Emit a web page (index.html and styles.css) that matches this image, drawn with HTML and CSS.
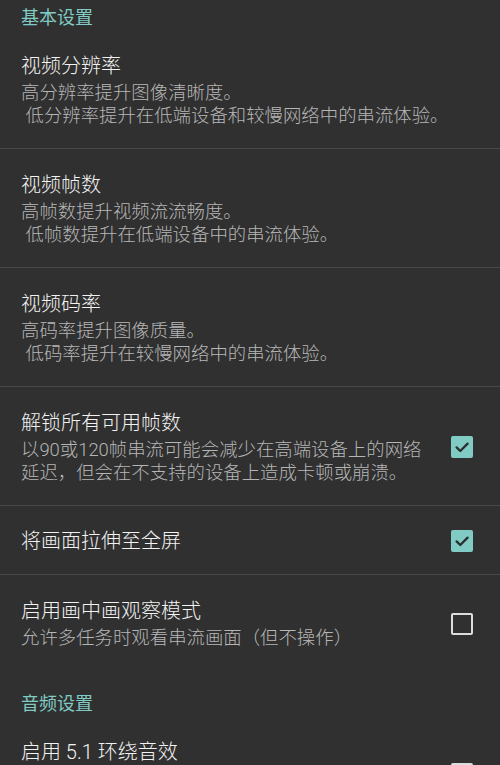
FILE: index.html
```html
<!DOCTYPE html>
<html lang="zh">
<head>
<meta charset="utf-8">
<title>设置</title>
<link rel="stylesheet" href="styles.css">
</head>
<body>
<div class="prefs">
  <div class="category first">基本设置</div>

  <div class="pref divided">
    <div class="text">
      <div class="title">视频分辨率</div>
      <div class="summary">高分辨率提升图像清晰度。
 低分辨率提升在低端设备和较慢网络中的串流体验。</div>
    </div>
  </div>

  <div class="pref divided">
    <div class="text">
      <div class="title">视频帧数</div>
      <div class="summary">高帧数提升视频流流畅度。
 低帧数提升在低端设备中的串流体验。</div>
    </div>
  </div>

  <div class="pref divided">
    <div class="text">
      <div class="title">视频码率</div>
      <div class="summary">高码率提升图像质量。
 低码率提升在较慢网络中的串流体验。</div>
    </div>
  </div>

  <div class="pref divided">
    <div class="text">
      <div class="title">解锁所有可用帧数</div>
      <div class="summary">以90或120帧串流可能会减少在高端设备上的网络延迟，但会在不支持的设备上造成卡顿或崩溃。</div>
    </div>
    <div class="widget">
      <span class="check on"><svg viewBox="0 0 22 22" width="22" height="22"><path d="M5.6 11.4 L9.3 15 L16.6 7.6" fill="none" stroke="#2b2f2f" stroke-width="2.3" stroke-linecap="round" stroke-linejoin="round"/></svg></span>
    </div>
  </div>

  <div class="pref divided single">
    <div class="text">
      <div class="title">将画面拉伸至全屏</div>
    </div>
    <div class="widget">
      <span class="check on"><svg viewBox="0 0 22 22" width="22" height="22"><path d="M5.6 11.4 L9.3 15 L16.6 7.6" fill="none" stroke="#2b2f2f" stroke-width="2.3" stroke-linecap="round" stroke-linejoin="round"/></svg></span>
    </div>
  </div>

  <div class="pref">
    <div class="text">
      <div class="title">启用画中画观察模式</div>
      <div class="summary">允许多任务时观看串流画面（但不操作）</div>
    </div>
    <div class="widget">
      <span class="check off"></span>
    </div>
  </div>

  <div class="category">音频设置</div>

  <div class="pref last">
    <div class="text">
      <div class="title">启用 5.1 环绕音效</div>
    </div>
    <div class="widget">
      <span class="check off"></span>
    </div>
  </div>
</div>
</body>
</html>
```

FILE: styles.css
```css
html, body {
  margin: 0;
  padding: 0;
  background: #303030;
}

body {
  width: 500px;
  height: 765px;
  overflow: hidden;
  font-family: Roboto, "Noto Sans CJK SC", sans-serif;
}

.prefs {
  display: flex;
  flex-direction: column;
}

.category {
  padding: 21px 21px 0 21px;
  font-size: 18px;
  line-height: 24px;
  color: #80cbc4;
}

.category.first {
  padding-top: 6px;
}

.pref {
  display: flex;
  align-items: center;
  padding: 23px 27px 22px 21px;
}

.pref.divided {
  border-bottom: 1px solid #484848;
  padding-bottom: 21px;
}

.pref.single {
  padding-top: 22px;
  padding-bottom: 20px;
}

.pref.last {
  min-height: 70px;
}

.pref.last .text {
  align-self: flex-start;
}

.text {
  flex: 1;
  min-width: 0;
}

.title {
  font-size: 20px;
  line-height: 26px;
  font-weight: 300;
  color: #f2f2f2;
}

.summary {
  margin-top: 2px;
  font-size: 18.4px;
  line-height: 23px;
  font-weight: 300;
  color: #b6b6b6;
  white-space: pre-wrap;
}

.widget {
  flex: none;
  margin-left: 26px;
  display: flex;
  align-items: center;
}

.check {
  display: block;
  width: 22px;
  height: 22px;
  box-sizing: border-box;
  border-radius: 2px;
}

.check svg {
  display: block;
}

.check.on {
  background: #80cbc4;
}

.check.off {
  border: 2px solid #dcdcdc;
}
```
